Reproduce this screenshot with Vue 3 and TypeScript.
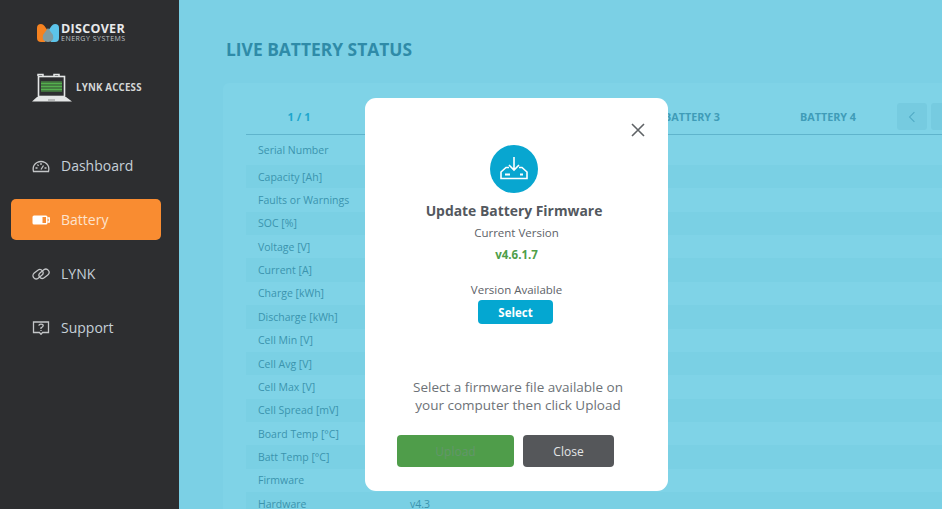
<template>
  <div class="page">
    <aside class="sidebar">
      <div class="brand">
        <svg class="brand-mark" viewBox="0 0 22 18" width="22" height="18">
          <path d="M0 4Q0 0 4 0Q6 0 7.500 2L11 7L8 18H4Q0 18 0 14Z" fill="#f58220" />
          <path d="M22 4Q22 0 18 0Q16 0 14.500 2L11 7L14 18H18Q22 18 22 14Z" fill="#5cc4ea" />
          <path d="M11 4L16 11Q17.500 18 11 18Q4.500 18 6 11Z" fill="#7f9ca3" />
        </svg>
        <div class="brand-text">
          <div class="brand-name">DISCOVER</div>
          <div class="brand-sub">ENERGY SYSTEMS</div>
        </div>
      </div>
      <div class="access">
        <svg class="laptop" viewBox="0 0 42 29" width="42" height="29">
          <path d="M7 3V1.500H12V3M23 3V1.500H28V3" stroke="#e4e6e6" stroke-width="1.500" fill="none" />
          <rect x="7.500" y="3.500" width="26" height="20" fill="#2d2e30" stroke="#e4e6e6" stroke-width="1.600" />
          <rect x="10" y="8" width="21" height="11" fill="#3f6b3c" />
          <path d="M10 10.500H31M10 13.500H31M10 16.500H31" stroke="#54b04e" stroke-width="1.400" />
          <path d="M6 24H35L41 28.500H1Z" fill="#e4e6e6" />
          <rect x="17" y="26.500" width="7" height="1" fill="#8b8d8e" />
        </svg>
        <span>LYNK ACCESS</span>
      </div>
      <nav class="nav">
        <a v-for="item in navItems" :key="item.label" class="nav-item" :class="{ active: item.active }">
          <svg class="nav-icon" viewBox="0 0 18 14" width="18" height="14" fill="none" stroke="currentColor" stroke-width="1.300">
            <template v-if="item.icon === 'gauge'">
              <path d="M1.500 12.500Q0 6.500 5 3.500Q9 1.500 13 3.500Q18 6.500 16.500 12.500Z" />
              <path d="M9 10.500L11.500 6.500M3.500 9H5.500M12.500 9H14.500M5.500 5.500L6.500 7M9 4V6" />
            </template>
            <template v-else-if="item.icon === 'battery'">
              <rect x="0.500" y="2.500" width="15" height="9" rx="1.500" fill="#fff" stroke="none" />
              <rect x="10.500" y="4" width="3.500" height="6" fill="#f98c31" stroke="none" />
              <path d="M15.500 5H17.300V9H15.500" stroke="#fff" />
            </template>
            <template v-else-if="item.icon === 'link'">
              <rect x="0.500" y="4" width="11" height="6.400" rx="3.200" transform="rotate(-38 6 7.200)" />
              <rect x="6.500" y="3.600" width="11" height="6.400" rx="3.200" transform="rotate(-38 12 6.800)" />
            </template>
            <template v-else>
              <path d="M1.500 1H16.500V11.500H10.500L9 13.300L7.500 11.500H1.500Z" />
              <path d="M6.800 4.600Q7 3.200 9 3.200Q11.200 3.200 11.200 4.800Q11.200 5.800 9 6.800V8M9 8.900V10" stroke-width="1.300" />
            </template>
          </svg>
          <span>{{ item.label }}</span>
        </a>
      </nav>
    </aside>

    <main class="content">
      <h1 class="title">LIVE BATTERY STATUS</h1>
      <section class="panel">
        <div class="tabs">
          <div class="tab first">1 / 1</div>
          <div v-for="tab in tabs" :key="tab" class="tab">{{ tab }}</div>
          <button class="arrow">
            <svg viewBox="0 0 10 16" width="8" height="14" fill="none" stroke="currentColor" stroke-width="1.300">
              <path d="M8 2L2 8L8 14" />
            </svg>
          </button>
          <button class="arrow"></button>
        </div>
        <div v-for="row in rows" :key="row.label" class="row">
          <div class="row-label">{{ row.label }}</div>
          <div class="row-value">{{ row.value }}</div>
        </div>
      </section>

      <div class="overlay">
        <div class="modal">
          <svg class="close-x" viewBox="0 0 14 14" width="14" height="14" fill="none" stroke="#5f6366" stroke-width="1.600">
            <path d="M1 1L13 13M13 1L1 13" />
          </svg>
          <div class="modal-icon">
            <svg viewBox="0 0 28 24" width="28" height="24" fill="none" stroke="#fff" stroke-width="1.600">
              <path d="M14 0V13M9 8L14 13L19 8" />
              <path d="M9 10.500H6L1 15V21.500H27V15L22 10.500H19" />
              <path d="M5 17.500H10M20 17.500H23" stroke-width="2" />
            </svg>
          </div>
          <h2 class="modal-title">Update Battery Firmware</h2>
          <div class="current">Current Version</div>
          <div class="version">v4.6.1.7</div>
          <div class="available">Version Available</div>
          <button class="select">Select</button>
          <p class="hint">Select a firmware file available on<br />your computer then click Upload</p>
          <div class="actions">
            <button class="upload" disabled>Upload</button>
            <button class="close">Close</button>
          </div>
        </div>
      </div>
    </main>
  </div>
</template>

<script setup lang="ts">
interface NavItem {
  label: string
  icon: string
  active?: boolean
}

const navItems: NavItem[] = [
  { label: 'Dashboard', icon: 'gauge' },
  { label: 'Battery', icon: 'battery', active: true },
  { label: 'LYNK', icon: 'link' },
  { label: 'Support', icon: 'support' },
]

const tabs = ['BATTERY 1', 'BATTERY 2', 'BATTERY 3', 'BATTERY 4']

const rows = [
  'Serial Number',
  'Capacity [Ah]',
  'Faults or Warnings',
  'SOC [%]',
  'Voltage [V]',
  'Current [A]',
  'Charge [kWh]',
  'Discharge [kWh]',
  'Cell Min [V]',
  'Cell Avg [V]',
  'Cell Max [V]',
  'Cell Spread [mV]',
  'Board Temp [°C]',
  'Batt Temp [°C]',
  'Firmware',
  'Hardware',
].map((label) => ({ label, value: label === 'Hardware' ? 'v4.3' : '' }))
</script>

<style>
html,
body {
  margin: 0;
  overflow: hidden;
}
</style>

<style scoped>
.page {
  display: flex;
  width: 942px;
  height: 509px;
  overflow: hidden;
  font-family: 'Open Sans', 'Noto Sans', sans-serif;
}

.sidebar {
  width: 179px;
  flex-shrink: 0;
  background: #2d2e30;
  display: flex;
  flex-direction: column;
}

.brand {
  display: flex;
  align-items: center;
  gap: 2px;
  padding: 22px 0 0 37px;
}

.brand-mark {
  flex-shrink: 0;
}

.brand-name {
  color: #e8e9ea;
  font-size: 12.500px;
  font-weight: 700;
  line-height: 13px;
  letter-spacing: 0.300px;
}

.brand-sub {
  color: #bfc2c4;
  font-size: 7px;
  line-height: 8px;
  letter-spacing: 0.500px;
  white-space: nowrap;
}

.access {
  display: flex;
  align-items: center;
  gap: 3px;
  padding: 30px 0 0 31px;
  color: #d4d6d6;
  font-size: 9.700px;
  font-weight: 700;
  letter-spacing: 0.200px;
}

.nav {
  display: flex;
  flex-direction: column;
  gap: 13px;
  margin: 43px 18px 0 11px;
}

.nav-item {
  display: flex;
  align-items: center;
  gap: 11px;
  height: 41px;
  padding-left: 21px;
  border-radius: 5px;
  color: #c6d0d8;
  font-size: 14px;
}

.nav-icon {
  color: #c4c6c8;
  flex-shrink: 0;
}

.nav-item.active {
  background: #f98c31;
  color: #fde3cd;
}

.nav-item.active .nav-icon {
  color: #fff;
}

.content {
  position: relative;
  flex: 1;
  background: #7bd0e5;
  padding: 38px 0 0 44px;
}

.title {
  margin: 0 0 0 3px;
  color: #2f8ba8;
  font-size: 17.400px;
  font-weight: 700;
  line-height: 23px;
}

.panel {
  margin-top: 22px;
  padding: 14px 0 0 23px;
  background: #7fd3e7;
  border-radius: 6px 0 0 0;
  height: 500px;
}

.tabs {
  display: grid;
  grid-template-columns: 106px repeat(4, 136px) 30px 30px;
  align-items: center;
  box-sizing: border-box;
  height: 38px;
  padding-top: 2px;
  border-bottom: 1px solid #5fb4cc;
}

.tab {
  text-align: center;
  color: #3f9cb8;
  font-size: 10.800px;
  font-weight: 700;
}

.tab.first {
  color: #1ea6cc;
  font-size: 11px;
}

.arrow {
  width: 30px;
  height: 27px;
  margin-left: 1px;
  padding: 0;
  border: none;
  border-radius: 3px;
  background: #76cbe0;
  color: #4fa9c3;
  display: flex;
  align-items: center;
  justify-content: center;
}

.arrow + .arrow {
  margin-left: 5px;
}

.row {
  display: grid;
  grid-template-columns: 152px 1fr;
  align-items: center;
  height: 23.360px;
  padding-left: 12px;
  font-size: 10.500px;
  color: #3b94ae;
}

.row:nth-child(2) {
  height: 30px;
}

.row:nth-child(odd) {
  background: #7ad0e4;
}

.overlay {
  position: absolute;
  inset: 0;
}

.modal {
  position: absolute;
  left: 186px;
  top: 98px;
  width: 303px;
  height: 393px;
  box-sizing: border-box;
  padding-top: 47px;
  background: #fff;
  border-radius: 11px;
  display: flex;
  flex-direction: column;
  align-items: center;
  text-align: center;
  color: #5d6268;
  font-size: 11.500px;
}

.close-x {
  position: absolute;
  top: 25px;
  right: 23px;
}

.modal-icon {
  width: 48px;
  height: 48px;
  margin-right: 5px;
  border-radius: 50%;
  background: #08a6d0;
  display: flex;
  align-items: center;
  justify-content: center;
}

.modal-title {
  margin: 8px 5px 0 0;
  color: #53585e;
  font-size: 13.900px;
  font-weight: 700;
  line-height: 20px;
}

.current {
  margin-top: 4px;
  line-height: 16px;
}

.version {
  margin-top: 6px;
  color: #4e9e49;
  font-weight: 700;
  line-height: 16px;
}

.available {
  margin-top: 19px;
  line-height: 16px;
}

.select {
  width: 75px;
  height: 24px;
  margin: 2px 2px 0 0;
  padding: 0;
  border: none;
  border-radius: 4px;
  background: #04a7d1;
  color: #fff;
  font: 700 11.500px 'Open Sans', sans-serif;
}

.hint {
  margin: 54px 0 0 3px;
  color: #6d7277;
  font-size: 13.500px;
  line-height: 18px;
}

.actions {
  display: flex;
  gap: 9px;
  align-self: flex-start;
  margin: 21px 0 0 32px;
}

.actions button {
  height: 32px;
  padding: 0;
  border: none;
  border-radius: 4px;
  font: 12px 'Open Sans', sans-serif;
}

.upload {
  width: 117px;
  background: #4f9d4a;
  color: #63966a;
}

.close {
  width: 91px;
  background: #55575a;
  color: #e4e6e7;
}
</style>
